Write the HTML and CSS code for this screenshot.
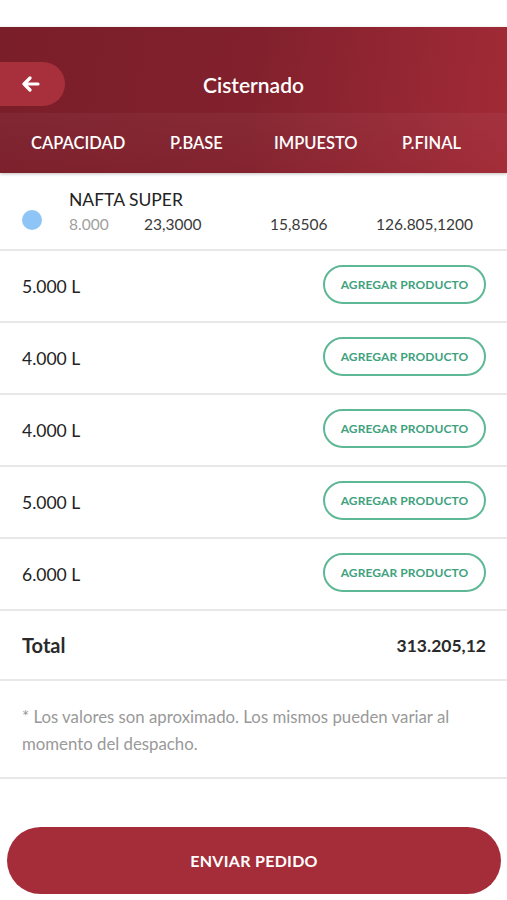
FILE: index.html
```html
<!DOCTYPE html>
<html>
<head>
<meta charset="UTF-8">
<meta name="viewport" content="width=device-width">
<title>Cisternado</title>
<link rel="stylesheet" href="styles.css">
</head>
<body>
  <div class="topbar"></div>
  <header class="head">
    <div class="title-row">
      <button class="back">
        <svg width="18" height="16" viewBox="0 0 18 16"><path d="M8 2 L2 8 L8 14 M2 8 H16" fill="none" stroke="#fff" stroke-width="3.2" stroke-linecap="round" stroke-linejoin="round"/></svg>
      </button>
      <h1>Cisternado</h1>
    </div>
    <div class="cols">
      <span>CAPACIDAD</span>
      <span>P.BASE</span>
      <span>IMPUESTO</span>
      <span>P.FINAL</span>
    </div>
  </header>

  <section class="product">
    <span class="dot"></span>
    <div class="pinfo">
      <div class="pname">NAFTA SUPER</div>
      <div class="pvals">
        <span class="cap">8.000</span>
        <span class="base">23,3000</span>
        <span class="tax">15,8506</span>
        <span class="final">126.805,1200</span>
      </div>
    </div>
  </section>

  <div class="row"><span>5.000 L</span><button class="add">AGREGAR PRODUCTO</button></div>
  <div class="row"><span>4.000 L</span><button class="add">AGREGAR PRODUCTO</button></div>
  <div class="row"><span>4.000 L</span><button class="add">AGREGAR PRODUCTO</button></div>
  <div class="row"><span>5.000 L</span><button class="add">AGREGAR PRODUCTO</button></div>
  <div class="row"><span>6.000 L</span><button class="add">AGREGAR PRODUCTO</button></div>

  <div class="total"><span class="tlabel">Total</span><span class="tval">313.205,12</span></div>

  <p class="note">* Los valores son aproximado. Los mismos pueden variar al momento del despacho.</p>

  <div class="send-wrap"><button class="send">ENVIAR PEDIDO</button></div>
</body>
</html>
```
FILE: styles.css
```css
body {
  margin: 0;
  font-family: 'Lato', 'Noto Sans', sans-serif;
  color: #2a2a2a;
  background: #fff;
}
button { font-family: inherit; cursor: pointer; }

.topbar { height: 27px; }

.head {
  background: linear-gradient(100deg, #7a1e2a 0%, #82212d 50%, #a22b37 100%);
  color: #fff;
  box-shadow: 0 1px 3px rgba(0,0,0,0.25);
}
.title-row {
  height: 86px;
  box-sizing: border-box;
  padding-bottom: 7px;
  display: grid;
  grid-template-columns: 65px 1fr 65px;
  align-items: end;
}
.back {
  width: 65px;
  height: 44px;
  border: none;
  border-radius: 0 22px 22px 0;
  background: #a8303c;
  padding: 0 4px 0 0;
  display: flex;
  align-items: center;
  justify-content: center;
}
.title-row h1 {
  margin: 0;
  height: 44px;
  display: flex;
  align-items: center;
  justify-content: center;
  font-size: 21px;
  font-weight: 600;
}
.cols {
  height: 60px;
  display: flex;
  align-items: center;
  font-size: 16.5px;
  font-weight: 600;
  background: linear-gradient(180deg, rgba(255,255,255,0.04), rgba(255,255,255,0.01));
}
.cols span:nth-child(1) { margin-left: 31px; width: 139px; }
.cols span:nth-child(2) { width: 104px; }
.cols span:nth-child(3) { width: 128px; }

.product {
  height: 76px;
  display: flex;
  align-items: center;
  border-bottom: 2px solid #e8e8e8;
}
.dot {
  width: 20px; height: 20px;
  border-radius: 50%;
  background: #8fc4f6;
  margin: 17px 27px 0 22px;
}
.pname { font-size: 17.5px; color: #222; margin-bottom: 5px; }
.pvals { display: flex; font-size: 15.5px; color: #3a3a3a; }
.pvals .cap { color: #a0a0a0; width: 75px; }
.pvals .base { width: 126px; }
.pvals .tax { width: 106px; }

.row {
  height: 70px;
  display: flex;
  align-items: center;
  justify-content: space-between;
  padding: 0 21px 0 22px;
  border-bottom: 2px solid #e8e8e8;
  font-size: 17.5px;
  color: #222;
}
.add {
  width: 163px;
  height: 39px;
  margin-top: -3px;
  border: 2px solid #5fb895;
  border-radius: 20px;
  background: #fff;
  color: #3ea27d;
  font-size: 12px;
  font-weight: 700;
  letter-spacing: 0.1px;
}

.total {
  height: 68px;
  display: flex;
  align-items: center;
  justify-content: space-between;
  padding: 0 21px 0 22px;
  border-bottom: 2px solid #e8e8e8;
}
.tlabel { font-size: 20px; font-weight: 700; }
.tval { font-size: 17.5px; font-weight: 700; }

.note {
  margin: 0;
  padding: 22px 40px 20px 22px;
  font-size: 16.8px;
  line-height: 27px;
  color: #999;
  border-bottom: 2px solid #e8e8e8;
}

.send-wrap { padding: 48px 6px 0 7px; }
.send {
  width: 100%;
  height: 67px;
  border: none;
  border-radius: 34px;
  background: #a52d3a;
  color: #fff;
  font-size: 16px;
  font-weight: 700;
  letter-spacing: 0.3px;
}
```
